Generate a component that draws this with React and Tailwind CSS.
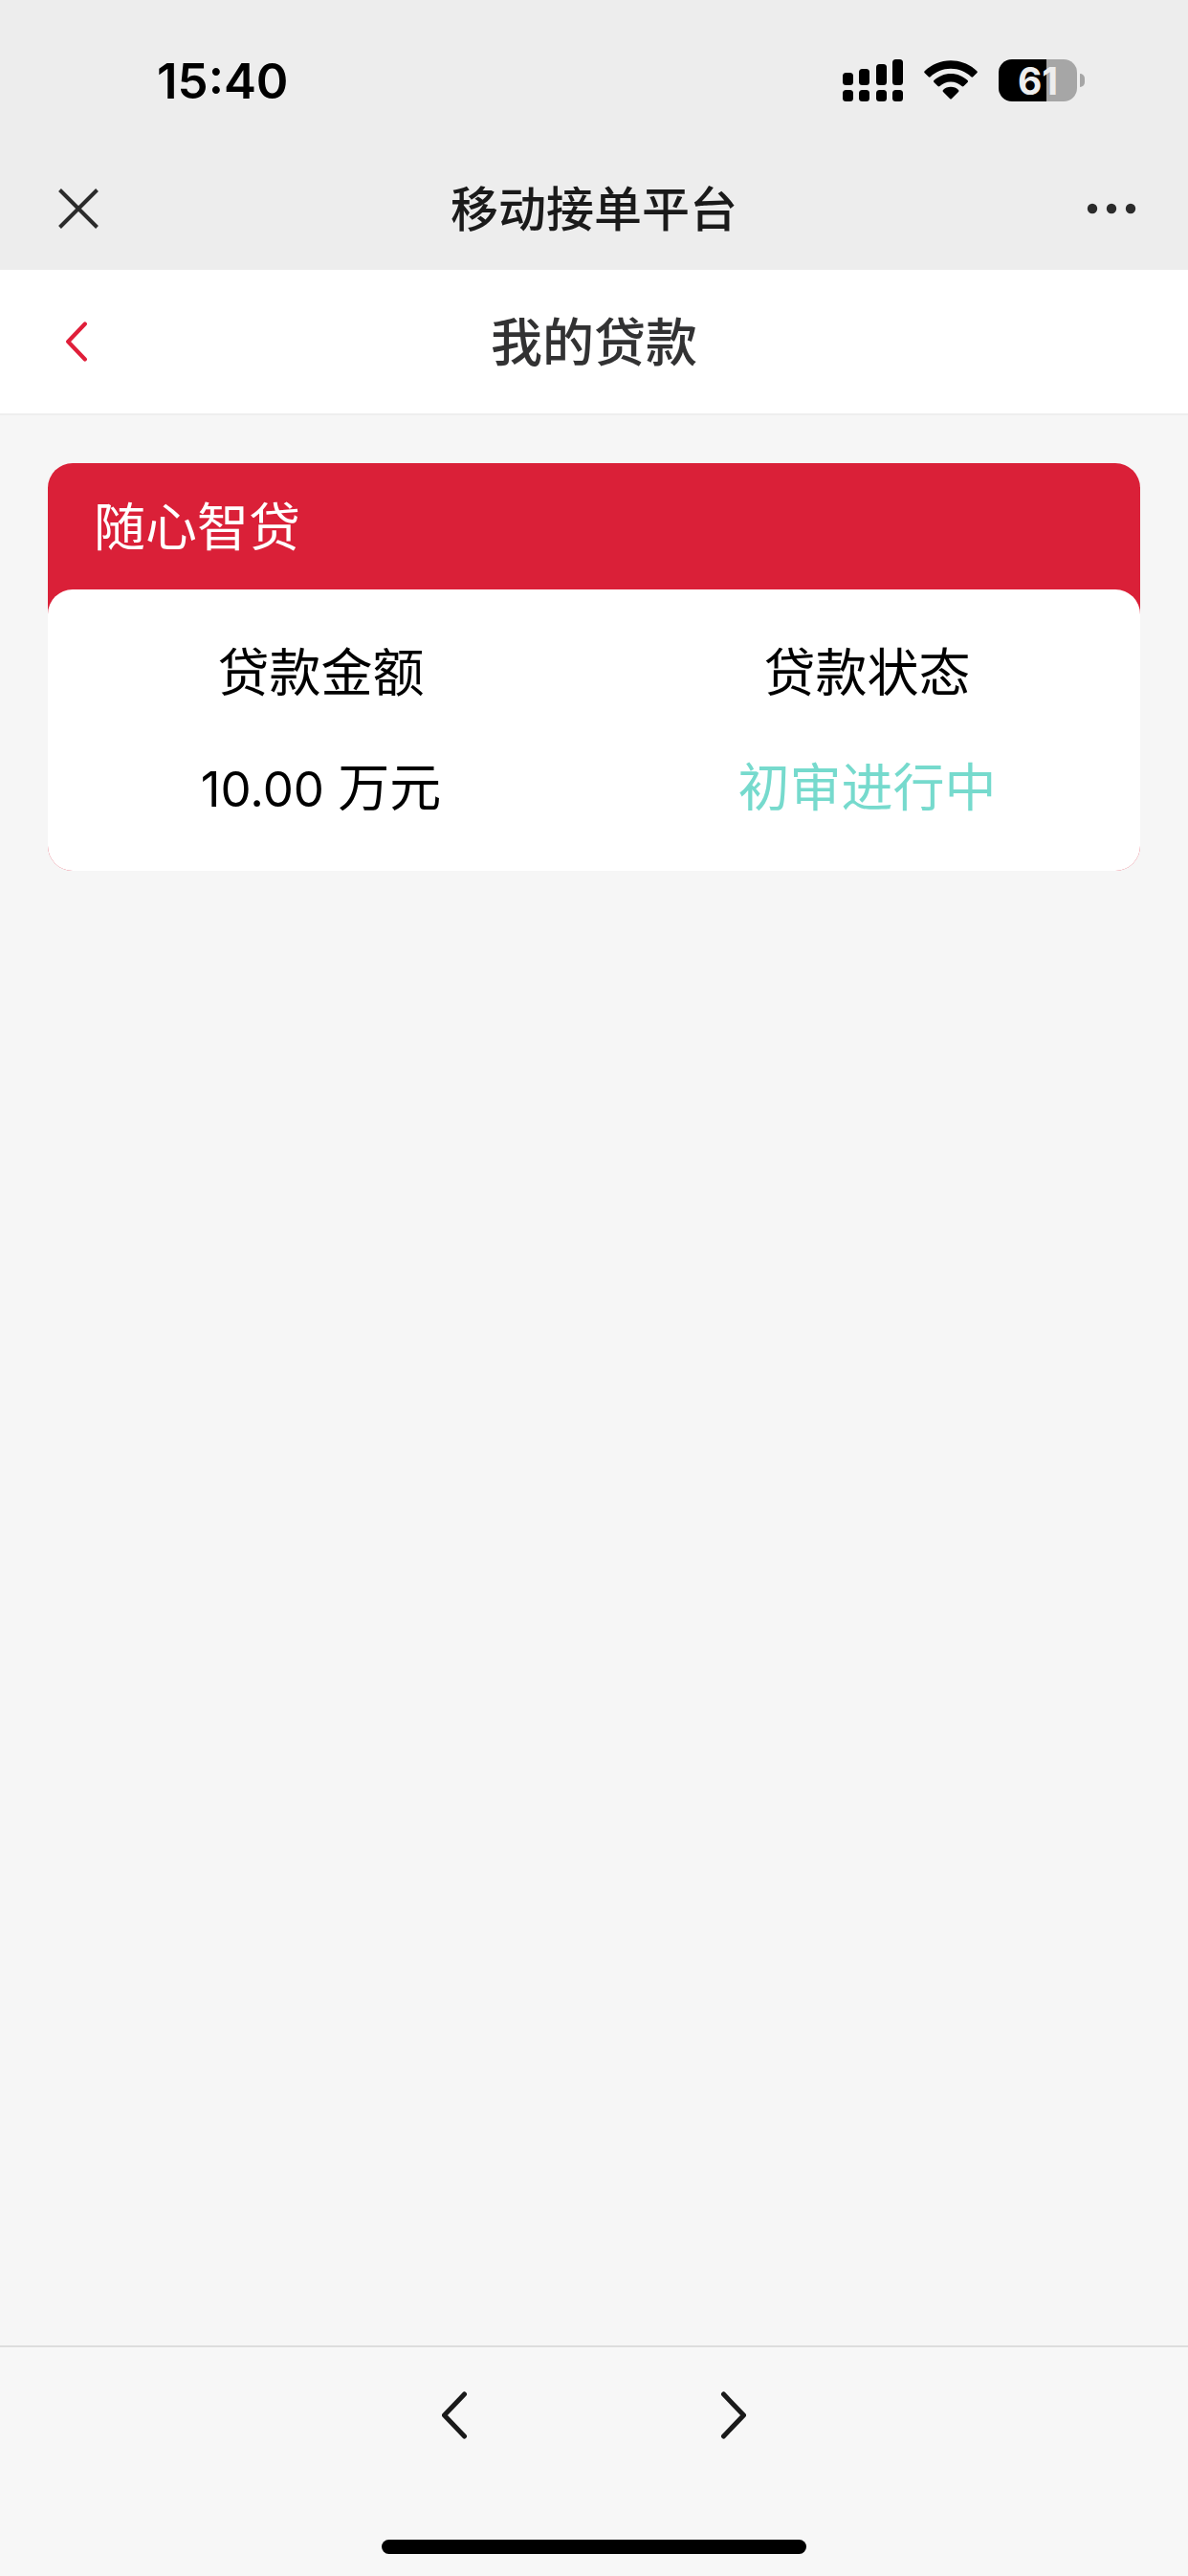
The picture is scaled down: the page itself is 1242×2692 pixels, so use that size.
const STATUS_BARS = [
  { x: 0, y: 14, h: 13 },
  { x: 17, y: 10, h: 17 },
  { x: 35, y: 5, h: 22 },
  { x: 52, y: 0, h: 27 },
];

function SignalIcon() {
  return (
    <svg className="h-11 w-[63px]" viewBox="0 0 63 44" role="img" aria-label="信号">
      {STATUS_BARS.map((bar) => (
        <g key={bar.x}>
          <rect x={bar.x} y={bar.y} width="11" height={bar.h} rx="3.5" />
          <rect x={bar.x} y="32" width="11" height="12" rx="3.5" />
        </g>
      ))}
    </svg>
  );
}

function WifiIcon() {
  return (
    <svg className="h-11 w-14" viewBox="0 0 56 44" role="img" aria-label="无线网络">
      <path d="M28 1.2C38.6 1.2 48.2 5.400 55.300 12.200Q56.300 13.200 55.300 14.200L51.200 18.200Q50.300 19.100 49.300 18.200C43.700 12.900 36.300 9.700 28 9.700S12.300 12.900 6.700 18.200Q5.700 19.100 4.800 18.200L.7 14.200Q-.3 13.200 .7 12.200C7.800 5.400 17.400 1.200 28 1.200Z" />
      <path d="M28 15C34.800 15 41 17.700 45.600 22.100Q46.600 23.100 45.600 24.100L41.500 28.100Q40.500 29 39.500 28.100C36.500 25.200 32.500 23.500 28 23.500S19.500 25.200 16.500 28.100Q15.500 29 14.500 28.100L10.400 24.100Q9.400 23.100 10.400 22.100C15 17.700 21.200 15 28 15Z" />
      <path d="M28 28.800C31.100 28.800 33.900 30 36 32Q37 33 36 34L29 41.100Q28 42.100 27 41.100L20 34Q19 33 20 32C22.100 30 24.900 28.800 28 28.800Z" />
    </svg>
  );
}

function Battery() {
  return (
    <div className="flex items-center gap-[3px]">
      <div className="flex h-11 w-[82px] items-center justify-center rounded-[14px] bg-[linear-gradient(to_right,#000_61%,#a6a6a6_61%)] text-[39px] leading-none font-bold text-[#ededed]">
        61
      </div>
      <div className="h-[14px] w-[5px] rounded-r-full bg-[#a6a6a6]" />
    </div>
  );
}

function Chevron({ className, right = false, width = 4 }) {
  return (
    <svg
      className={className}
      viewBox="0 0 26 50"
      fill="none"
      stroke="currentColor"
      strokeWidth={width}
      strokeLinecap="round"
      strokeLinejoin="round"
      aria-hidden="true"
    >
      <path d={right ? "M2.500 3L23.500 25L2.500 47" : "M23.500 3L2.500 25L23.500 47"} />
    </svg>
  );
}

function Field({ label, children, valueClass }) {
  return (
    <div className="text-center text-[54px] leading-[120px]">
      <dt>{label}</dt>
      <dd className={valueClass}>{children}</dd>
    </div>
  );
}

export default function App() {
  return (
    <div className="flex min-h-screen flex-col bg-[#f6f6f6] font-['Inter','Noto_Sans_CJK_SC',sans-serif] text-black">
      <header className="bg-[#ededed] pb-[14px]">
        <div className="flex h-[168px] items-center justify-between pr-[108px] pl-[164px]">
          <time className="text-[51px] leading-none font-semibold">15:40</time>
          <div className="flex items-center gap-[22px]">
            <SignalIcon />
            <WifiIcon />
            <Battery />
          </div>
        </div>
        <div className="grid h-[100px] grid-cols-[1fr_auto_1fr] items-center px-[54px]">
          <button type="button" aria-label="关闭" className="flex w-14 justify-center justify-self-start text-[#2b2b2b]">
            <svg className="size-[42px]" viewBox="0 0 42 42" fill="none" stroke="currentColor" strokeWidth="4">
              <path d="M1.500 1.500L40.500 40.500M40.500 1.500L1.500 40.500" />
            </svg>
          </button>
          <h1 className="pt-[2px] text-[50px] leading-none font-medium text-[#1a1a1a]">移动接单平台</h1>
          <button type="button" aria-label="更多" className="justify-self-end text-[#2b2b2b]">
            <svg className="h-3 w-[52px]" viewBox="0 0 52 12" fill="currentColor">
              <circle cx="6" cy="6" r="5.200" />
              <circle cx="26" cy="6" r="5.200" />
              <circle cx="46" cy="6" r="5.200" />
            </svg>
          </button>
        </div>
      </header>

      <div className="grid h-[152px] grid-cols-[1fr_auto_1fr] items-center border-b-2 border-[#eeeeee] bg-white px-[54px]">
        <button type="button" aria-label="返回" className="flex w-[52px] justify-center justify-self-start text-[#e01f3a]">
          <Chevron className="h-[42px] w-6" width={5} />
        </button>
        <h2 className="pt-1 text-[54px] leading-none font-medium text-[#323233]">我的贷款</h2>
      </div>

      <main className="flex-1 px-[50px] pt-[50px]">
        <section className="rounded-[26px] bg-[#da2038]">
          <h3 className="px-12 pt-1 text-[54px] leading-[128px] text-white">随心智贷</h3>
          <dl className="grid grid-cols-2 rounded-[26px] bg-white pt-7 pb-[25px]">
            <Field label="贷款金额">
              <span className="text-[51px]">10.00 </span>万元
            </Field>
            <Field label="贷款状态" valueClass="text-[#76dacd]">
              初审进行中
            </Field>
          </dl>
        </section>
      </main>

      <footer className="border-t-2 border-[#dddddd] bg-[#f7f7f7]">
        <nav aria-label="页面导航" className="flex h-[142px] items-center justify-center gap-[242px] text-[#1a1a1a]">
          <button type="button" aria-label="后退" className="px-3">
            <Chevron className="h-[50px] w-[26px]" width={5} />
          </button>
          <button type="button" aria-label="前进" className="px-3">
            <Chevron className="h-[50px] w-[26px]" width={5} right />
          </button>
        </nav>
        <div className="mx-auto mt-[59px] mb-[23px] h-[15px] w-[444px] rounded-full bg-black" />
      </footer>
    </div>
  );
}
